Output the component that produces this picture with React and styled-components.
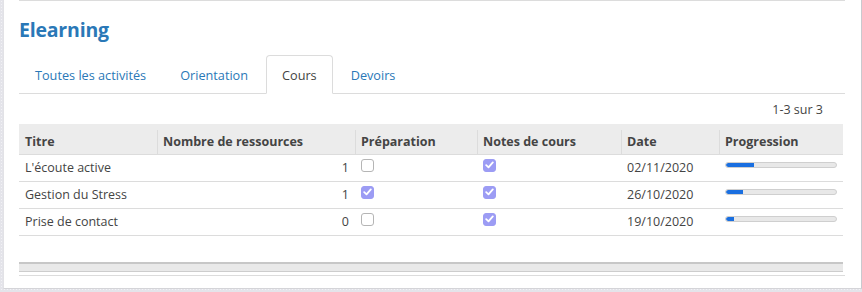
import React from "react";
import styled, { createGlobalStyle } from "styled-components";

const GlobalStyle = createGlobalStyle`
  html, body {
    margin: 0;
    padding: 0;
  }
  body {
    width: 862px;
    height: 292px;
    overflow: hidden;
    font-family: "Open Sans", "DejaVu Sans", sans-serif;
    font-size: 13px;
    color: #444;
    background-color: #e4e4ea;
    background-image: radial-gradient(#f2f2f5 1px, transparent 1px);
    background-size: 3px 3px;
  }
`;

const courses = [
  { title: "L'écoute active", count: 1, prep: false, notes: true, date: "02/11/2020", progress: 25 },
  { title: "Gestion du Stress", count: 1, prep: true, notes: true, date: "26/10/2020", progress: 15 },
  { title: "Prise de contact", count: 0, prep: false, notes: true, date: "19/10/2020", progress: 7 },
];

const tabs = ["Toutes les activités", "Orientation", "Cours", "Devoirs"];

const columns = [
  { label: "Titre", width: 138 },
  { label: "Nombre de ressources", width: 198 },
  { label: "Préparation", width: 122 },
  { label: "Notes de cours", width: 144 },
  { label: "Date", width: 98 },
  { label: "Progression", width: 124 },
];

const Panel = styled.div`
  margin-left: 3px;
  width: 842px;
  height: 288px;
  padding: 0 0 0 15px;
  background: #fff;
  border-left: 1px solid #e2e2e6;
  border-right: 1px solid #c9c9ce;
  border-bottom: 1px solid #d4d4d8;
`;

const Content = styled.div`
  width: 826px;
  border-top: 1px solid #dcdcdc;
`;

const Title = styled.h2`
  margin: 0;
  padding-top: 16px;
  height: 54px;
  box-sizing: border-box;
  font-size: 19.5px;
  line-height: 26px;
  font-weight: 700;
  color: #2a78b7;
  letter-spacing: -0.2px;
`;

const TabBar = styled.ul`
  display: flex;
  align-items: flex-start;
  margin: 0;
  padding: 0;
  list-style: none;
  height: 39px;
  border-bottom: 1px solid #dcdcdc;
  box-sizing: border-box;
`;

const Tab = styled.li`
  flex: none;
  height: 39px;
  box-sizing: border-box;
  padding: 0 15px;
  margin-right: 2px;
  display: flex;
  align-items: center;
  font-size: 12.7px;
  color: ${(p) => (p.$active ? "#444" : "#2a78b7")};
  background: ${(p) => (p.$active ? "#fff" : "transparent")};
  border: 1px solid ${(p) => (p.$active ? "#dcdcdc" : "transparent")};
  border-bottom-color: ${(p) => (p.$active ? "#fff" : "transparent")};
  border-radius: 4px 4px 0 0;
`;

const Pager = styled.div`
  height: 30px;
  padding-right: 22px;
  display: flex;
  align-items: center;
  justify-content: flex-end;
  font-size: 12.5px;
  color: #444;
`;

const Table = styled.table`
  width: 824px;
  border-collapse: collapse;
  table-layout: fixed;
`;

const HeadCell = styled.th`
  position: relative;
  height: 30px;
  box-sizing: border-box;
  padding: 5px 6px 0;
  text-align: left;
  font-size: 12.5px;
  font-weight: 700;
  color: #444;
  background: #ececec;
  border-bottom: 1px solid #dcdcdc;
  vertical-align: middle;

  & + &::before {
    content: "";
    position: absolute;
    left: 0;
    top: 6px;
    bottom: 0;
    width: 1px;
    background: #dcdcdc;
  }
`;

const Cell = styled.td`
  height: 27px;
  padding: 0 6px;
  box-sizing: border-box;
  font-size: 12.5px;
  color: #444;
  border-bottom: 1px solid #dcdcdc;
  text-align: ${(p) => (p.$right ? "right" : "left")};
  vertical-align: middle;
`;

const Check = styled.span`
  width: 13px;
  height: 13px;
  margin-top: -5px;
  box-sizing: border-box;
  border-radius: 3px;
  border: 1px solid ${(p) => (p.$on ? "#9c9cf4" : "#b5b5b5")};
  background: ${(p) => (p.$on ? "#9c9cf4" : "#fff")};
  display: flex;
  align-items: center;
  justify-content: center;
`;

const Bar = styled.div`
  width: 112px;
  height: 6px;
  margin-top: -6px;
  box-sizing: border-box;
  border-radius: 3px;
  border: 1px solid #cfcfcf;
  background: #e8e8e8;
  overflow: hidden;
`;

const BarFill = styled.div`
  height: 100%;
  background: #1a6fe0;
  border-radius: 2px 0 0 2px;
`;

const Footer = styled.div`
  margin-top: 26px;
  width: 824px;
  height: 7px;
  border-top: 2px solid #c7c7c7;
  border-bottom: 1px solid #cdcdcd;
  background: #e9e9e9;
`;

const FooterRule = styled.div`
  margin-top: 3px;
  width: 826px;
  border-top: 1px solid #dcdcdc;
`;

const CheckBox = ({ on }) => (
  <Check $on={on}>
    {on && (
      <svg width="9" height="8" viewBox="0 0 9 8">
        <path d="M1.2 4.2 L3.5 6.3 L7.8 1.4" fill="none" stroke="#fff" strokeWidth="1.8" strokeLinecap="round" strokeLinejoin="round" />
      </svg>
    )}
  </Check>
);

const App = () => (
  <>
    <GlobalStyle />
    <Panel>
      <Content>
        <Title>Elearning</Title>
        <TabBar>
          {tabs.map((t) => (
            <Tab key={t} $active={t === "Cours"}>
              {t}
            </Tab>
          ))}
        </TabBar>
        <Pager>1-3 sur 3</Pager>
        <Table>
          <colgroup>
            {columns.map((c) => (
              <col key={c.label} style={{ width: c.width }} />
            ))}
          </colgroup>
          <thead>
            <tr>
              {columns.map((c) => (
                <HeadCell key={c.label}>{c.label}</HeadCell>
              ))}
            </tr>
          </thead>
          <tbody>
            {courses.map((c) => (
              <tr key={c.title}>
                <Cell>{c.title}</Cell>
                <Cell $right>{c.count}</Cell>
                <Cell>
                  <CheckBox on={c.prep} />
                </Cell>
                <Cell>
                  <CheckBox on={c.notes} />
                </Cell>
                <Cell>{c.date}</Cell>
                <Cell>
                  <Bar>
                    <BarFill style={{ width: `${c.progress}%` }} />
                  </Bar>
                </Cell>
              </tr>
            ))}
          </tbody>
        </Table>
        <Footer />
        <FooterRule />
      </Content>
    </Panel>
  </>
);

export default App;
